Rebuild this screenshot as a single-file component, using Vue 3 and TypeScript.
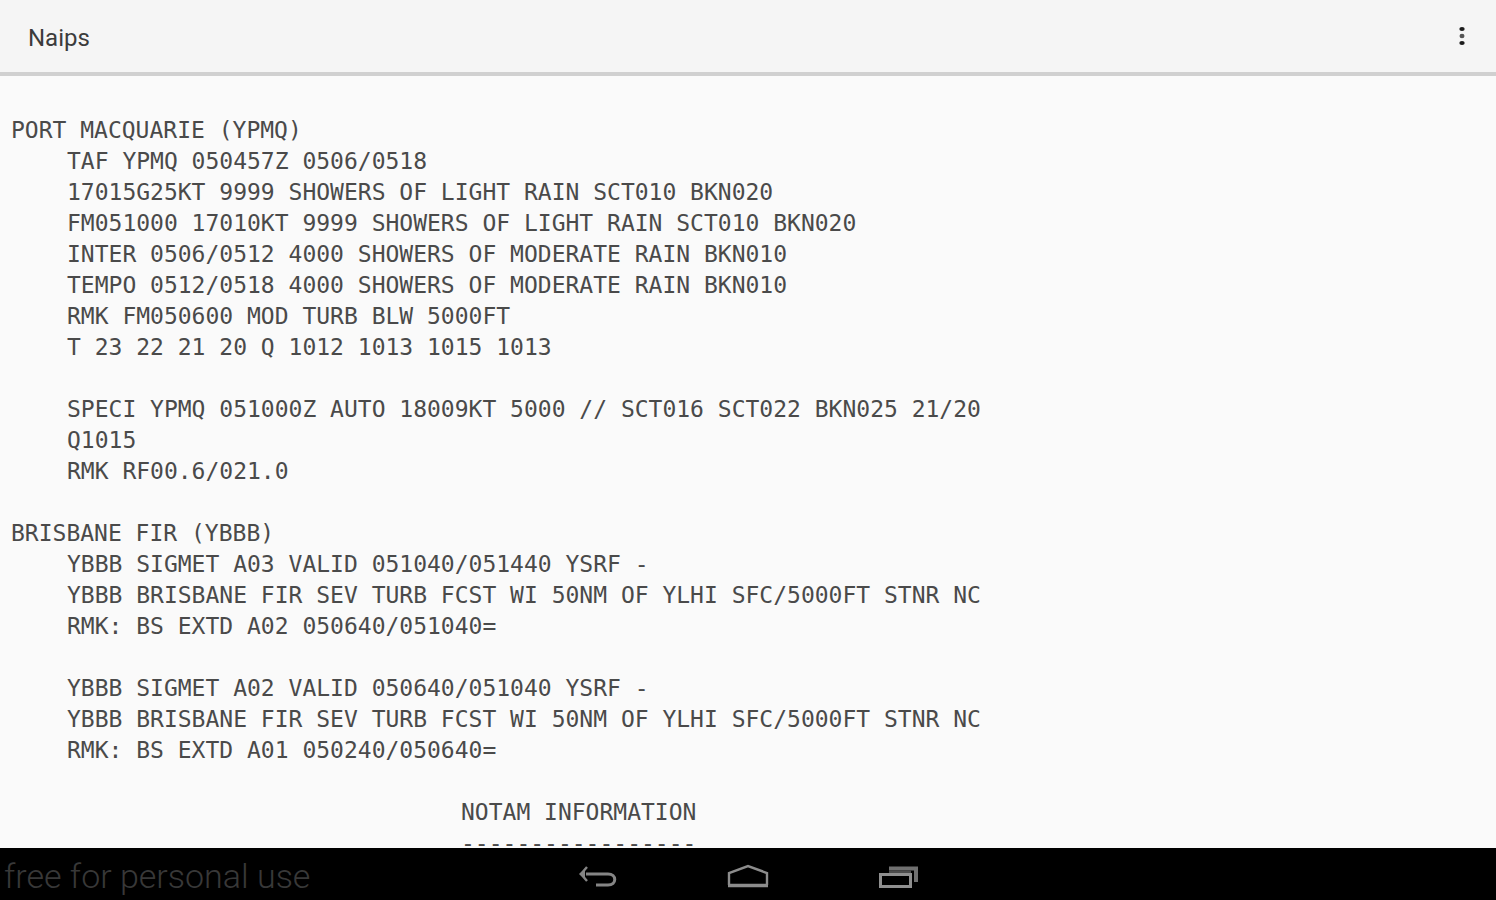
<script setup lang="ts">
interface Report {
  id: string
  station?: string
  layout: 'body' | 'banner'
  text: string
}

const reports: Report[] = [
  {
    id: 'ypmq',
    station: 'PORT MACQUARIE (YPMQ)',
    layout: 'body',
    text: `TAF YPMQ 050457Z 0506/0518
17015G25KT 9999 SHOWERS OF LIGHT RAIN SCT010 BKN020
FM051000 17010KT 9999 SHOWERS OF LIGHT RAIN SCT010 BKN020
INTER 0506/0512 4000 SHOWERS OF MODERATE RAIN BKN010
TEMPO 0512/0518 4000 SHOWERS OF MODERATE RAIN BKN010
RMK FM050600 MOD TURB BLW 5000FT
T 23 22 21 20 Q 1012 1013 1015 1013

SPECI YPMQ 051000Z AUTO 18009KT 5000 // SCT016 SCT022 BKN025 21/20
Q1015
RMK RF00.6/021.0`,
  },
  {
    id: 'ybbb',
    station: 'BRISBANE FIR (YBBB)',
    layout: 'body',
    text: `YBBB SIGMET A03 VALID 051040/051440 YSRF -
YBBB BRISBANE FIR SEV TURB FCST WI 50NM OF YLHI SFC/5000FT STNR NC
RMK: BS EXTD A02 050640/051040=

YBBB SIGMET A02 VALID 050640/051040 YSRF -
YBBB BRISBANE FIR SEV TURB FCST WI 50NM OF YLHI SFC/5000FT STNR NC
RMK: BS EXTD A01 050240/050640=`,
  },
  {
    id: 'notam',
    layout: 'banner',
    text: `NOTAM INFORMATION
-----------------`,
  },
]
</script>

<template>
  <div class="screen">
    <header class="app-bar">
      <h1 class="title">Naips</h1>
      <button class="overflow" type="button" aria-label="More options">
        <svg width="8" height="20" viewBox="0 0 8 20" fill="#1c1c1c" aria-hidden="true">
          <ellipse cx="4" cy="3" rx="2.7" ry="2" />
          <ellipse cx="4" cy="10" rx="2.5" ry="2.2" fill="#555" />
          <ellipse cx="4" cy="17" rx="2.7" ry="2" />
        </svg>
      </button>
    </header>

    <main class="briefing">
      <section v-for="report in reports" :key="report.id">
        <h2 v-if="report.station" class="station">{{ report.station }}</h2>
        <pre :class="['report', report.layout]">{{ report.text }}</pre>
      </section>
    </main>

    <footer class="nav-bar">
      <span class="notice">free for personal use</span>
      <nav class="nav-keys" aria-label="System navigation">
        <button class="key" type="button" aria-label="Back">
          <svg width="42" height="28" viewBox="0 0 42 28" fill="none" stroke="#858585" aria-hidden="true">
            <path d="M9 10H31C40 10 40 21 31 21H19" stroke-width="3" />
            <path d="M10 3L4 10L10 17" stroke-width="2.4" />
            <path d="M2 10L8 5V15Z" fill="#858585" stroke="none" />
          </svg>
        </button>
        <button class="key" type="button" aria-label="Home">
          <svg width="44" height="28" viewBox="0 0 44 28" fill="none" stroke="#8c8c8c" aria-hidden="true">
            <path d="M3 21V9L22 2L41 9V21" stroke-width="2.4" />
            <path d="M2 21.5H42" stroke-width="3.4" />
          </svg>
        </button>
        <button class="key" type="button" aria-label="Recent apps">
          <svg width="42" height="28" viewBox="0 0 42 28" fill="none" aria-hidden="true">
            <path d="M12 4.5H39V18" stroke="#707070" stroke-width="4" />
            <path d="M12 8H34" stroke="#4c4c4c" stroke-width="3" />
            <rect x="3.5" y="10.5" width="30" height="12" stroke="#8f8f8f" stroke-width="3" />
          </svg>
        </button>
      </nav>
    </footer>
  </div>
</template>

<style>
body {
  margin: 0;
  background: #fafafa;
}
</style>

<style scoped>
.screen {
  display: flex;
  flex-direction: column;
  height: 100vh;
  overflow: hidden;
  background: #fafafa;
}

.app-bar {
  display: flex;
  align-items: center;
  justify-content: space-between;
  flex: none;
  height: 72px;
  padding: 0 20px 0 28px;
  background: #f5f5f5;
  border-bottom: 4px solid #d0d0d0;
}

.title {
  margin: 0;
  padding-top: 4px;
  font: 400 24px/32px Roboto, sans-serif;
  color: #3c3c3c;
}

.overflow,
.key {
  display: grid;
  place-items: center;
  padding: 0;
  border: 0;
  background: none;
}

.overflow {
  width: 28px;
  height: 40px;
}

.briefing {
  display: flex;
  flex-direction: column;
  gap: 31px;
  flex: 1;
  min-height: 0;
  overflow: hidden;
  padding: 39px 11px 0;
}

.station,
.report {
  margin: 0;
  font: 400 23px/31px "DejaVu Sans Mono", monospace;
  color: #4a4a4a;
}

.body {
  padding-left: 56px;
}

.banner {
  padding-left: 450px;
}

.nav-bar {
  display: grid;
  grid-template-columns: 1fr auto 1fr;
  align-items: center;
  flex: none;
  height: 48px;
  padding: 4px 4px 0;
  background: #000;
}

.notice {
  font: 300 34px/48px Roboto, sans-serif;
  color: #383838;
  white-space: nowrap;
}

.nav-keys {
  display: flex;
  gap: 70px;
  padding-top: 4px;
}

.key {
  width: 80px;
  height: 44px;
}
</style>
